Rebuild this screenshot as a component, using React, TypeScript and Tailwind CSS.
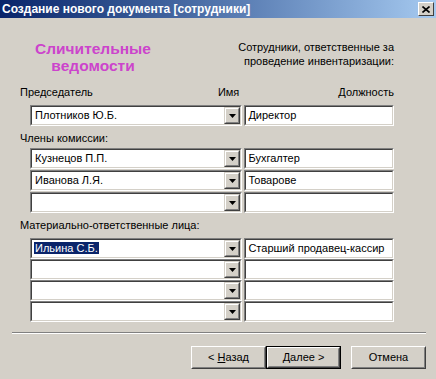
import React from "react";

const font = { fontFamily: '"Liberation Sans", Arial, sans-serif' };

function Sunken({ className = "", children }: { className?: string; children?: React.ReactNode }) {
  return (
    <div className={"border border-t-[#808080] border-l-[#808080] border-b-white border-r-white " + className}>
      <div className="h-full border border-t-[#404040] border-l-[#404040] border-b-[#D4D0C8] border-r-[#D4D0C8] bg-white flex items-center">
        {children}
      </div>
    </div>
  );
}

function ArrowButton() {
  return (
    <div className="w-[16px] h-full shrink-0 border border-t-[#D4D0C8] border-l-[#D4D0C8] border-b-[#404040] border-r-[#404040]">
      <div className="h-full border border-t-white border-l-white border-b-[#808080] border-r-[#808080] bg-[#D4D0C8] flex items-center justify-center">
        <svg width="7" height="4" viewBox="0 0 7 4">
          <path d="M0 0h7L3.5 4z" fill="#000" />
        </svg>
      </div>
    </div>
  );
}

function Row({ name, post, selected }: { name?: string; post?: string; selected?: boolean }) {
  return (
    <div className="flex h-[21px] ml-[10px] gap-[2px]">
      <Sunken className="w-[213px]">
        <div className="flex-1 pl-[2px] text-[11px] text-black leading-[13px] whitespace-nowrap">
          {name && (
            <span className={selected ? "bg-[#0A246A] text-white px-[1px]" : "px-[1px]"}>{name}</span>
          )}
        </div>
        <ArrowButton />
      </Sunken>
      <Sunken className="w-[150px]">
        <div className="pl-[2px] text-[11px] text-black leading-[13px] whitespace-nowrap">{post}</div>
      </Sunken>
    </div>
  );
}

function Button({ children, isDefault }: { children: React.ReactNode; isDefault?: boolean }) {
  const inner = (
    <div className="h-full border border-t-white border-l-white border-b-[#404040] border-r-[#404040]">
      <div className="h-full border border-t-[#D4D0C8] border-l-[#D4D0C8] border-b-[#808080] border-r-[#808080] bg-[#D4D0C8] flex items-center justify-center text-[11px] text-black">
        {children}
      </div>
    </div>
  );
  return (
    <div className={"w-[75px] h-[23px] " + (isDefault ? "border border-black" : "")}>{inner}</div>
  );
}

export default function App() {
  return (
    <div className="w-[436px] h-[379px] bg-[#D4D0C8] overflow-hidden flex flex-col" style={font}>
      {/* Title bar */}
      <div className="h-[18px] flex items-center justify-between bg-gradient-to-r from-[#0A246A] to-[#A6CAF0] pl-[2px] pr-[2px]">
        <span className="text-white font-bold text-[12px] leading-[14px] whitespace-nowrap">
          Создание нового документа [сотрудники]
        </span>
        <div className="w-[16px] h-[14px] border border-t-white border-l-white border-b-[#404040] border-r-[#404040] bg-[#D4D0C8] flex items-center justify-center">
          <svg width="8" height="7" viewBox="0 0 8 7">
            <path d="M0.5 0.5L7.5 6.5M7.5 0.5L0.5 6.5" stroke="#000" strokeWidth="1.6" />
          </svg>
        </div>
      </div>

      <div className="pl-[20px] w-[394px]">
        {/* Header */}
        <div className="mt-[22px] flex justify-between">
          <div className="w-[150px] ml-[-2px] text-center text-[#CC44CC] font-bold text-[15.5px] leading-[17px]">
            Сличительные
            <br />
            ведомости
          </div>
          <div className="text-right text-[11px] leading-[14px] text-black">
            Сотрудники, ответственные за
            <br />
            проведение инвентаризации:
          </div>
        </div>

        {/* Column labels */}
        <div className="mt-[12px] flex text-[11px] leading-[13px] text-black">
          <span>Председатель</span>
          <span className="ml-auto mr-[99px]">Имя</span>
          <span>Должность</span>
        </div>
        <div className="mt-[6px]">
          <Row name="Плотников Ю.Б." post="Директор" />
        </div>

        <div className="mt-[6px] text-[11px] leading-[13px] text-black">Члены комиссии:</div>
        <div className="mt-[3px] flex flex-col gap-[1px]">
          <Row name="Кузнецов П.П." post="Бухгалтер" />
          <Row name="Иванова Л.Я." post="Товарове" />
          <Row />
        </div>

        <div className="mt-[6px] text-[11px] leading-[13px] text-black">Материально-ответственные лица:</div>
        <div className="mt-[6px] flex flex-col">
          <Row name="Ильина С.Б." post="Старший продавец-кассир" selected />
          <Row />
          <Row />
          <Row />
        </div>
      </div>

      {/* Separator */}
      <div className="mt-[10px] ml-[12px] w-[414px] border-t border-t-[#808080] border-b border-b-white" />

      {/* Buttons */}
      <div className="mt-[12px] flex pl-[191px]">
        <Button>
          &lt; <span className="underline ml-[3px]">Н</span>азад
        </Button>
        <Button isDefault>
          <span className="underline">Д</span>алее &gt;
        </Button>
        <div className="ml-[10px]">
          <Button>Отмена</Button>
        </div>
      </div>
    </div>
  );
}
